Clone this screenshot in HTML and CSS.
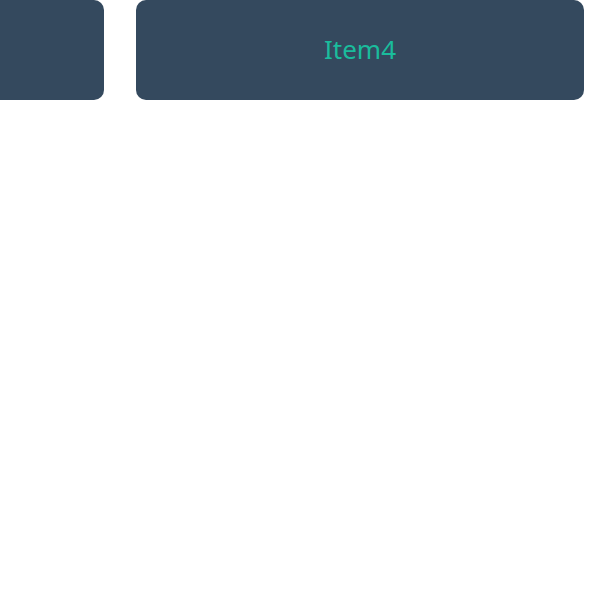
FILE: index.html
```html
<!DOCTYPE html>
<html>
<head>
<meta charset="utf-8">
<link rel="stylesheet" href="styles.css">
</head>
<body>
<div class="viewport">
  <div class="track">
    <div class="item">Item3</div>
    <div class="item">Item4</div>
  </div>
</div>
</body>
</html>
```
FILE: styles.css
```css
html, body {
  margin: 0;
  padding: 0;
  background: #ffffff;
}
.viewport {
  width: 600px;
  overflow: hidden;
}
.track {
  display: flex;
  gap: 32px;
  transform: translateX(-344px);
}
.item {
  flex: 0 0 448px;
  height: 100px;
  border-radius: 10px;
  background: #34495e;
  color: #1abc9c;
  font-family: "Noto Sans", sans-serif;
  font-size: 26px;
  line-height: 1;
  padding-bottom: 3px;
  box-sizing: border-box;
  display: flex;
  align-items: center;
  justify-content: center;
}
```
